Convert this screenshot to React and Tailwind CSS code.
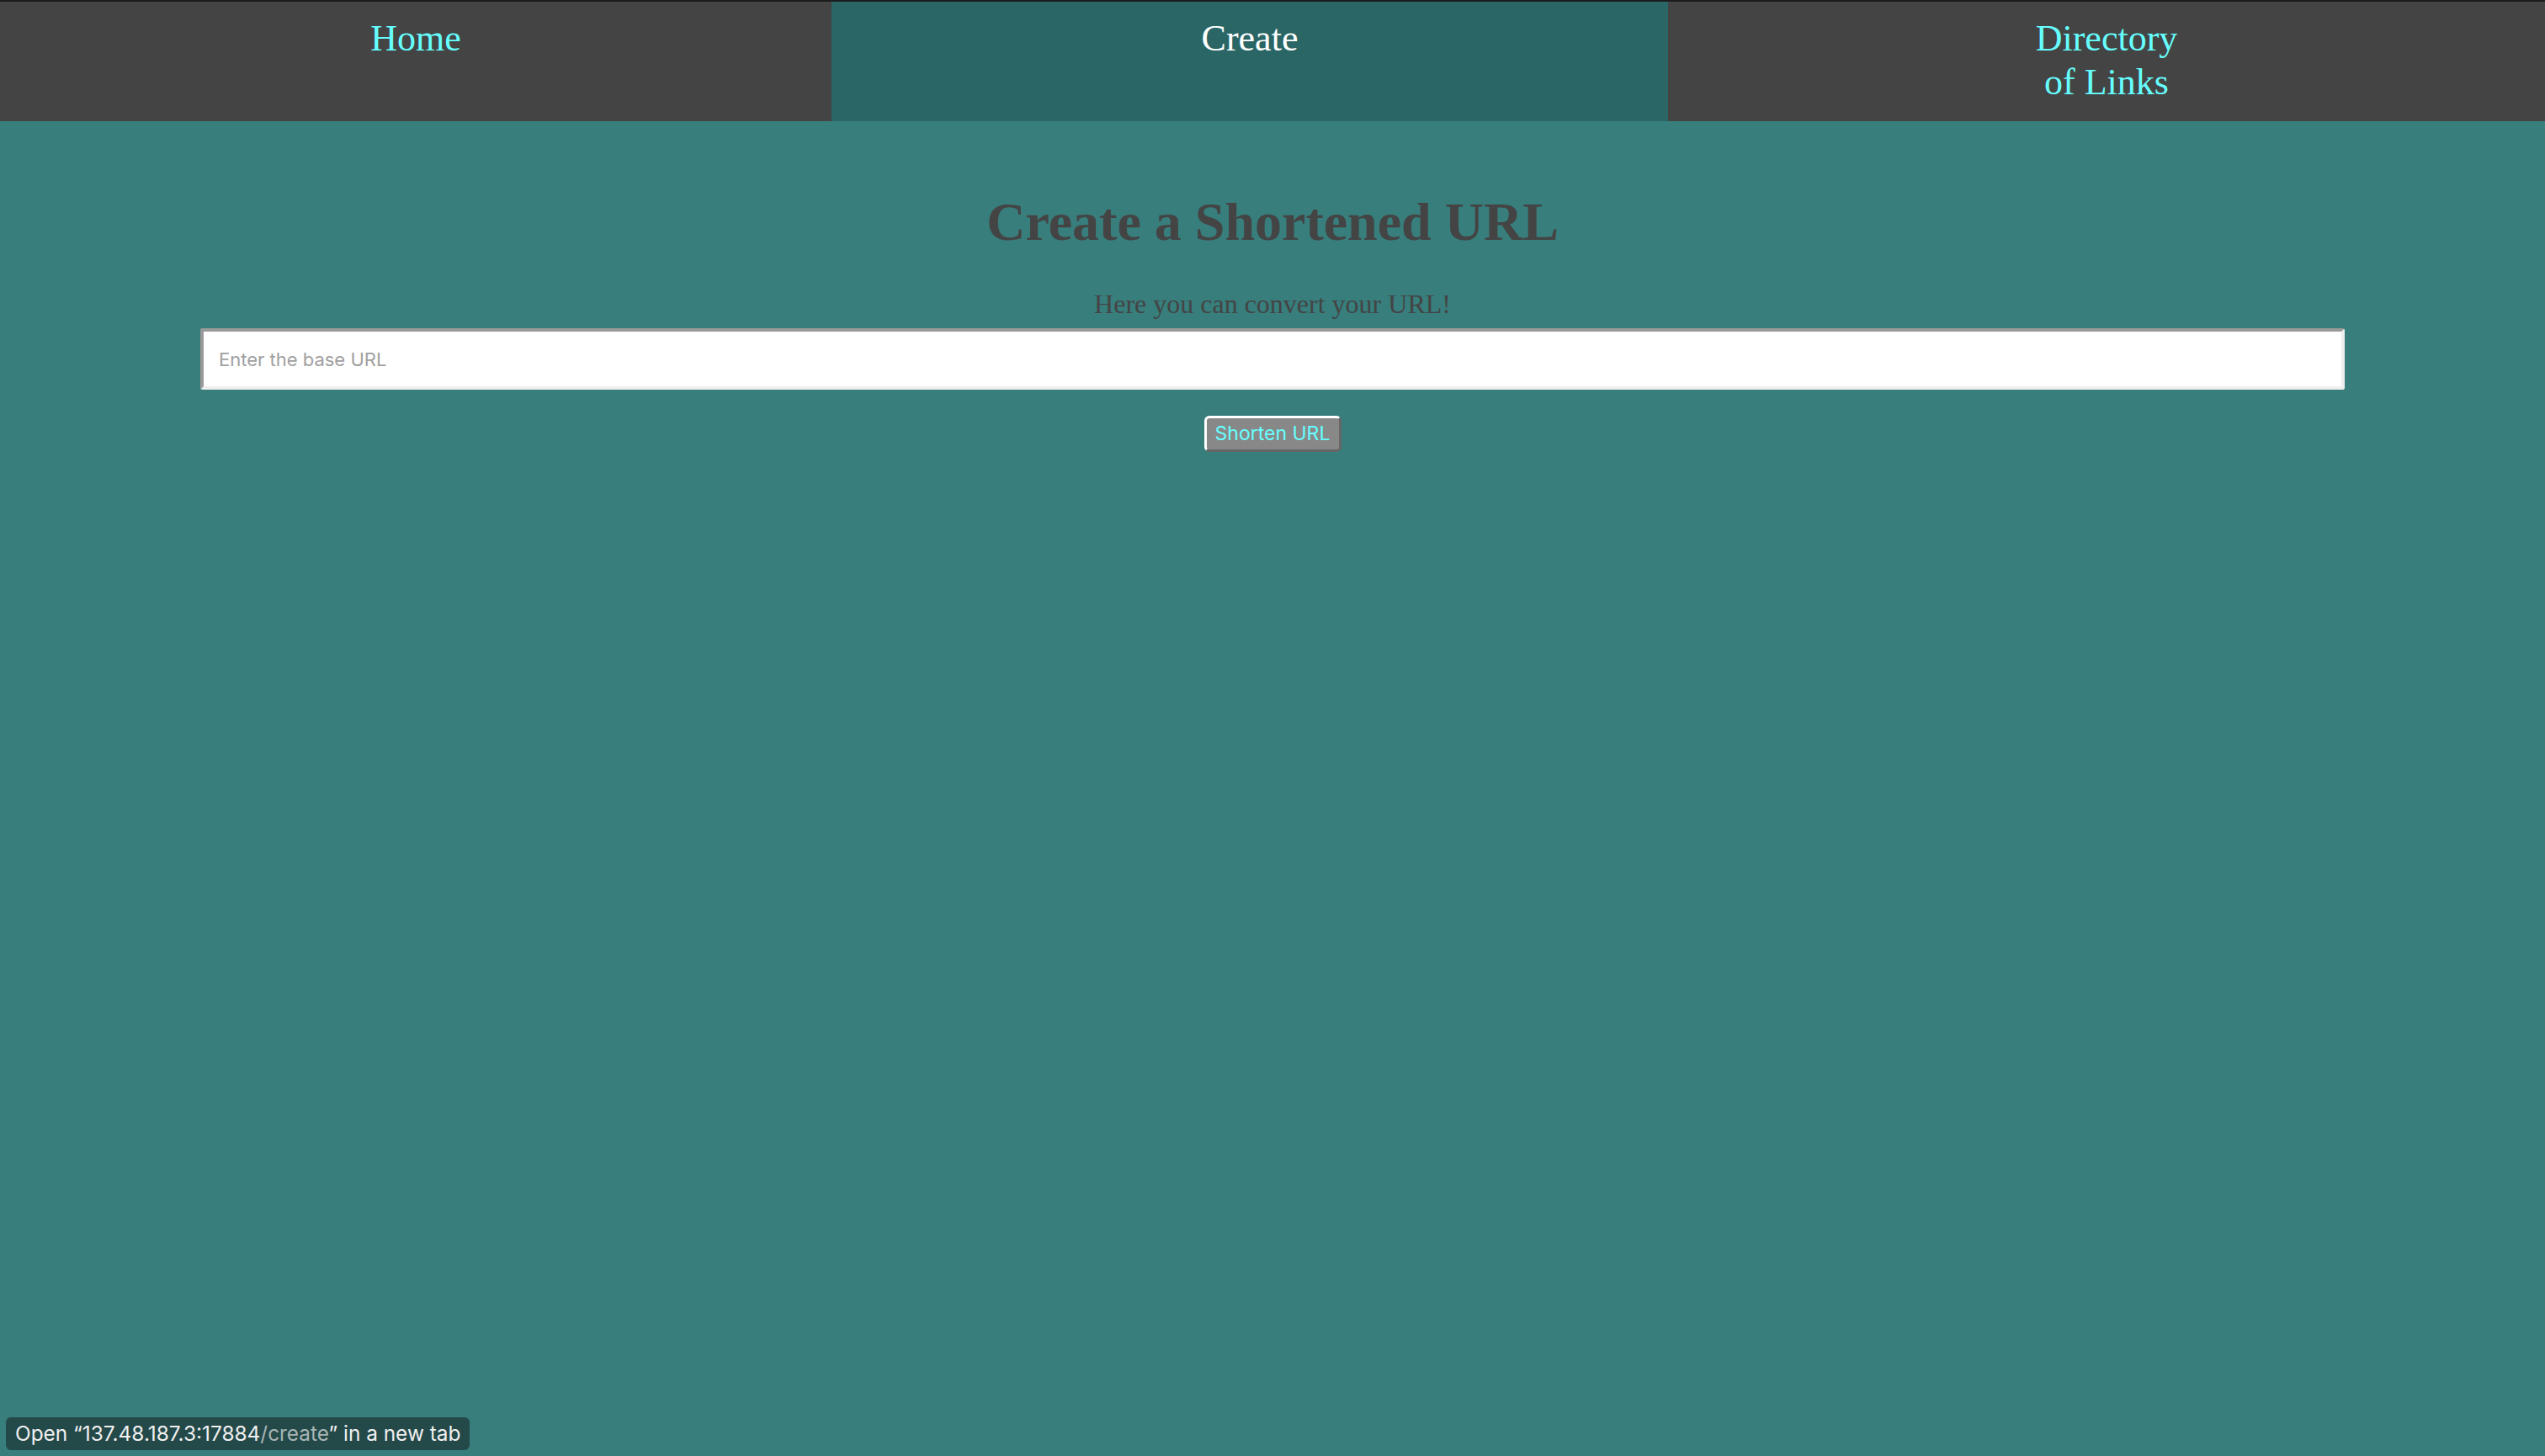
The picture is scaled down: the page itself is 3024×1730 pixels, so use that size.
import React from 'react';

const NAV_ITEMS = [
    { label: 'Home', width: 'w-[988px]', active: false },
    { label: 'Create', width: 'w-[994px]', active: true },
    { label: 'Directory of Links', width: 'flex-1', active: false }
];

export default function App() {
    return (
        <div className="relative min-h-screen bg-[#377e7c] font-['Liberation_Serif',serif]">
            {/* top edge */}
            <div className="h-[2px] bg-[#1c1c1c]" />

            {/* Navigation */}
            <nav className="flex h-[142px]">
                {NAV_ITEMS.map((item) => (
                    <a
                        key={item.label}
                        href="#"
                        className={`${item.width} pt-[18px] text-center text-[44px] leading-[52px] ${item.active ? 'bg-[#2a6665] text-white' : 'bg-[#444444] text-[#66ffff]'}`}
                    >
                        {item.label === 'Directory of Links' ? (
                            <>Directory<br />of Links</>
                        ) : item.label}
                    </a>
                ))}
            </nav>

            {/* Form */}
            <main className="flex flex-col items-center px-[238px]">
                <h1 className="mt-[81px] text-[64px] leading-[78px] font-bold text-[#444444]">
                    Create a Shortened URL
                </h1>
                <p className="mt-[39px] text-[32px] leading-[38px] text-[#444444]">
                    Here you can convert your URL!
                </p>
                <input
                    type="text"
                    placeholder="Enter the base URL"
                    className="mt-[10px] h-[73px] w-full rounded-[3px] border-4 border-t-[#999999] border-l-[#999999] border-b-[#eeeeee] border-r-[#eeeeee] bg-white px-[18px] font-['Inter',sans-serif] text-[22px] text-[#333] placeholder:text-[#a0a0a0] outline-none"
                />
                <button className="mt-[31px] h-[43px] w-[163px] rounded-[6px] border-[3px] border-t-white border-l-white border-b-[#666666] border-r-[#666666] bg-[#888888] font-['Inter',sans-serif] text-[23px] leading-none text-[#66ffff]">
                    Shorten URL
                </button>
            </main>

            {/* Link hover status */}
            <div className="absolute left-[7px] top-[1684px] h-[39px] whitespace-nowrap rounded-[6px] bg-[#244949] px-[11px] font-['Inter',sans-serif] text-[24.4px] leading-[39px] text-[#f0f0f0]">
                Open “137.48.187.3:17884<span className="text-[#a8b5b5]">/create</span>” in a new tab
            </div>
        </div>
    );
}
